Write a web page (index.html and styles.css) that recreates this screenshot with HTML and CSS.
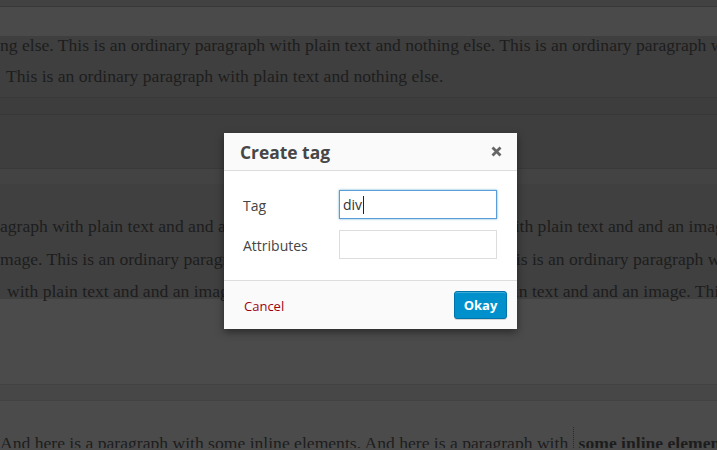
FILE: index.html
```html
<!DOCTYPE html>
<html lang="en">
<head>
<meta charset="utf-8">
<title>Create tag</title>
<link rel="stylesheet" href="styles.css">
</head>
<body>
<div class="page">
  <div class="strip strip-top"></div>
  <div class="strip strip-a"></div>
  <div class="para para-1">
    <div class="text">
      <p class="line">ng else. This is an ordinary paragraph with plain text and nothing else. This is an ordinary paragraph with</p>
      <p class="line line-in">This is an ordinary paragraph with plain text and nothing else.</p>
    </div>
  </div>
  <div class="strip strip-b"></div>
  <div class="strip strip-c"></div>
  <div class="strip strip-d"></div>
  <div class="para para-2">
    <p class="line">agraph with plain text and and an image. This is an ordinary paragraph with plain text and and an image.</p>
    <p class="line">mage. This is an ordinary paragraph with plain text and and an image. This is an ordinary paragraph with</p>
    <p class="line line-in2">with plain text and and an image. This is an ordinary paragraph with plain text and and an image. This is</p>
  </div>
  <div class="strip strip-e"></div>
  <div class="strip strip-f"></div>
  <div class="para para-3">
    <p class="line">And here is a paragraph with some inline elements. And here is a paragraph with <span class="inline-el"><b>some inline elements</b></span></p>
  </div>
</div>

<div class="dialog">
  <div class="dialog-header">
    <h1 class="dialog-title">Create tag</h1>
    <button class="dialog-close" type="button" aria-label="Close">
      <svg width="11" height="11" viewBox="0 0 11 11"><path d="M1.5 1.5 L9.5 9.5 M9.5 1.5 L1.5 9.5" stroke="#666" stroke-width="2.8" fill="none"/></svg>
    </button>
  </div>
  <div class="dialog-body">
    <div class="field">
      <label class="field-label">Tag</label>
      <div class="field-input is-focused">div<span class="caret"></span></div>
    </div>
    <div class="field">
      <label class="field-label">Attributes</label>
      <div class="field-input"></div>
    </div>
  </div>
  <div class="dialog-footer">
    <a class="cancel">Cancel</a>
    <button class="okay" type="button">Okay</button>
  </div>
</div>
</body>
</html>
```
FILE: styles.css
```css
html, body {
  margin: 0;
  padding: 0;
}
body {
  width: 717px;
  height: 450px;
  overflow: hidden;
  background: #4b4b4b;
  position: relative;
}
.page {
  width: 717px;
  overflow: hidden;
}
.strip-top {
  height: 6px;
  background: #424242;
  border-bottom: 1px solid #393939;
}
.strip-a {
  height: 29px;
  background: #4a4a4a;
}
.strip-b {
  height: 16px;
  background: #3d3d3d;
  border-top: 1px solid #393939;
  border-bottom: 1px solid #383838;
}
.strip-c {
  height: 53px;
  background: #3e3e3e;
  border-bottom: 1px solid #393939;
}
.strip-d {
  height: 15px;
  background: #434343;
}
.strip-e {
  height: 85px;
  background: #4b4b4b;
  border-bottom: 1px solid #424242;
}
.strip-f {
  height: 15px;
  background: #474747;
  border-bottom: 1px solid #424242;
}
.para {
  display: flow-root;
  overflow: hidden;
  font-family: "Liberation Serif", serif;
  font-size: 17.6px;
  color: #1d1d1d;
}
.para-1 {
  height: 61px;
  background: #3f3f3f;
  overflow: visible;
}
.para-1 .text {
  margin-top: -6px;
  overflow: hidden;
}
.para-1 .line {
  line-height: 31px;
}
.para-2 {
  height: 89px;
  padding-top: 26px;
  background: #404040;
  overflow: visible;
}
.para-2 .line {
  line-height: 32.5px;
}
.para-3 {
  height: 21px;
  padding-top: 26px;
  background: #4b4b4b;
}
.para-3 .line {
  line-height: 32px;
}
.line {
  margin: 0;
  white-space: nowrap;
  overflow: hidden;
}
.line-in {
  padding-left: 6px;
}
.line-in2 {
  padding-left: 7px;
}
.inline-el {
  border: 1px dotted #2a2a2a;
  padding: 6px 7px 4px 5px;
}

/* Dialog */
.dialog {
  position: absolute;
  left: 224px;
  top: 133px;
  width: 293px;
  background: #fff;
  box-shadow: 0 3px 8px rgba(0, 0, 0, 0.45);
  font-family: "Open Sans", sans-serif;
  color: #444;
}
.dialog-header {
  height: 37px;
  display: flex;
  align-items: center;
  justify-content: space-between;
  padding: 0 15px 0 16px;
  background: #fafafa;
  border-bottom: 1px solid #dddddd;
}
.dialog-title {
  margin: 0;
  font-size: 17.4px;
  font-weight: 700;
  color: #464646;
  line-height: 24px;
}
.dialog-close {
  border: 0;
  background: none;
  padding: 0;
  width: 11px;
  height: 11px;
  display: flex;
}
.dialog-body {
  padding: 19px 20px 21px 19px;
  display: flex;
  flex-direction: column;
  gap: 11px;
}
.field {
  display: grid;
  grid-template-columns: 96px 158px;
  align-items: center;
}
.field-label {
  font-size: 14px;
  line-height: 20px;
  padding-top: 3px;
  color: #444;
}
.field-input {
  box-sizing: border-box;
  height: 29px;
  border: 1px solid #dddddd;
  padding: 0 3px;
  font-size: 14px;
  line-height: 27px;
  color: #333;
  display: flex;
  align-items: center;
}
.field-input.is-focused {
  border-color: #5b9dd9;
  box-shadow: 0 0 2px rgba(30, 140, 190, 0.7);
}
.caret {
  width: 1px;
  height: 18px;
  background: #222;
  margin-left: 1px;
}
.dialog-footer {
  height: 48px;
  display: flex;
  align-items: center;
  justify-content: space-between;
  padding: 0 10px 0 20px;
  background: #fafafa;
  border-top: 1px solid #dddddd;
}
.cancel {
  font-size: 13px;
  color: #a00010;
  padding-top: 1px;
}
.okay {
  box-sizing: border-box;
  height: 28px;
  width: 53px;
  padding: 0;
  border: 1px solid #0073aa;
  border-radius: 3px;
  background: #0091cd;
  box-shadow: inset 0 1px 0 rgba(120, 200, 230, 0.5), 0 1px 0 rgba(0, 0, 0, 0.15);
  font-family: "Open Sans", sans-serif;
  font-size: 13px;
  font-weight: 700;
  color: #fff;
}
```
